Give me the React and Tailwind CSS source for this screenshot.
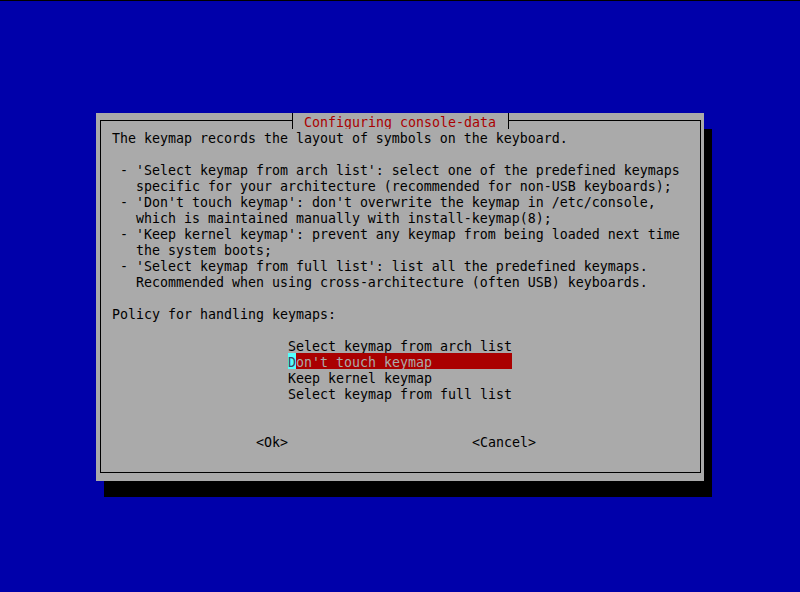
const info = [
  "The keymap records the layout of symbols on the keyboard.",
  "",
  " - 'Select keymap from arch list': select one of the predefined keymaps",
  "   specific for your architecture (recommended for non-USB keyboards);",
  " - 'Don't touch keymap': don't overwrite the keymap in /etc/console,",
  "   which is maintained manually with install-keymap(8);",
  " - 'Keep kernel keymap': prevent any keymap from being loaded next time",
  "   the system boots;",
  " - 'Select keymap from full list': list all the predefined keymaps.",
  "   Recommended when using cross-architecture (often USB) keyboards.",
  "",
  "Policy for handling keymaps:",
  "",
];

const choices = [
  "Select keymap from arch list",
  "Don't touch keymap",
  "Keep kernel keymap",
  "Select keymap from full list",
];

// every row of the console is 16px tall; the taller line-height only sinks the glyphs
const Line = ({ children }) => (
  <div className="h-[16px] whitespace-pre">{children}</div>
);

const App = () => {
  return (
    <div className="w-[800px] h-[592px] overflow-hidden bg-[#0000aa] border-t border-black pt-[112px] pl-[96px] font-['DejaVu_Sans_Mono',monospace] text-[13.29px] leading-[19px] text-black">
      <div className="w-[608px] h-[368px] bg-[#aaaaaa] shadow-[8px_16px_0_0_#000] pt-[7px] pl-[4px] pr-[3px]">
        <div className="relative h-[353px] border border-black pt-[8px] pl-[11px]">
          <div className="absolute left-[191px] top-[-8px] w-[217px] h-[16px] overflow-hidden bg-[#aaaaaa] border-x border-black pl-[3px] whitespace-pre text-[#aa0000]">
            {" Configuring console-data "}
          </div>

          {info.map((t, i) => (
            <Line key={i}>{t}</Line>
          ))}

          <div className="flex flex-col pl-[176px]">
            {choices.map((c, i) =>
              i === 1 ? (
                <div key={c} className="w-[224px] h-[16px] overflow-hidden bg-[#aa0000] text-[#aaaaaa] whitespace-pre flex">
                  <span className="bg-[#55ffff] text-[#404060]">D</span>
                  <span>{c.slice(1)}</span>
                </div>
              ) : (
                <div key={c} className="w-[224px] h-[16px] whitespace-pre">{c}</div>
              )
            )}
          </div>

          <Line>{""}</Line>
          <Line>{""}</Line>

          <div className="flex h-[16px] pl-[144px] gap-[184px] whitespace-pre">
            <span>{"<Ok>"}</span>
            <span>{"<Cancel>"}</span>
          </div>
        </div>
      </div>
    </div>
  );
};

export default App;
